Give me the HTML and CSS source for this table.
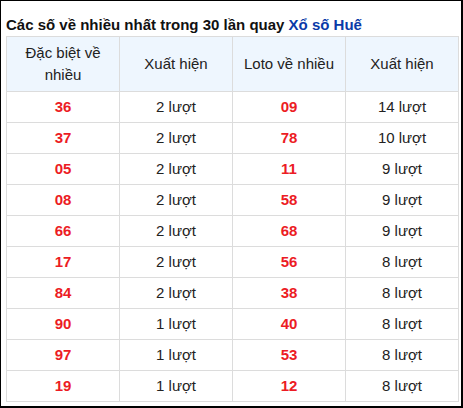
FILE: index.html
```html
<!DOCTYPE html>
<html lang="vi">
<head>
<meta charset="utf-8">
<link rel="stylesheet" href="styles.css">
</head>
<body>
<div class="frame">
  <h2 class="title">Các số về nhiều nhất trong 30 lần quay <a class="link" href="#">Xổ số Huế</a></h2>
  <table class="stats">
    <thead>
      <tr><th>Đặc biệt về nhiều</th><th>Xuất hiện</th><th>Loto về nhiều</th><th>Xuất hiện</th></tr>
    </thead>
    <tbody>
      <tr><td class="num">36</td><td>2 lượt</td><td class="num">09</td><td>14 lượt</td></tr>
      <tr><td class="num">37</td><td>2 lượt</td><td class="num">78</td><td>10 lượt</td></tr>
      <tr><td class="num">05</td><td>2 lượt</td><td class="num">11</td><td>9 lượt</td></tr>
      <tr><td class="num">08</td><td>2 lượt</td><td class="num">58</td><td>9 lượt</td></tr>
      <tr><td class="num">66</td><td>2 lượt</td><td class="num">68</td><td>9 lượt</td></tr>
      <tr><td class="num">17</td><td>2 lượt</td><td class="num">56</td><td>8 lượt</td></tr>
      <tr><td class="num">84</td><td>2 lượt</td><td class="num">38</td><td>8 lượt</td></tr>
      <tr><td class="num">90</td><td>1 lượt</td><td class="num">40</td><td>8 lượt</td></tr>
      <tr><td class="num">97</td><td>1 lượt</td><td class="num">53</td><td>8 lượt</td></tr>
      <tr><td class="num">19</td><td>1 lượt</td><td class="num">12</td><td>8 lượt</td></tr>
    </tbody>
  </table>
</div>
</body>
</html>
```
FILE: styles.css
```css
html, body {
  margin: 0;
  padding: 0;
  background: #fff;
}
body {
  font-family: "Liberation Sans", Arial, sans-serif;
  color: #222;
}
.frame {
  width: 463px;
  height: 408px;
  box-sizing: border-box;
  border-style: solid;
  border-color: #000;
  border-width: 1px 2px 2px 1px;
  padding: 0 2px 0 5px;
}
.title {
  margin: 0;
  padding: 14px 0 1px 0;
  font-size: 15px;
  line-height: 20px;
  font-weight: bold;
  color: #111;
}
.link {
  color: #0a3aa8;
  text-decoration: none;
}
.stats {
  width: 100%;
  border-collapse: collapse;
  table-layout: fixed;
  font-size: 15px;
  line-height: 22px;
}
.stats th, .stats td {
  border: 1px solid #dcdcdc;
  text-align: center;
  padding: 4px;
}
.stats th {
  background: #eef6fe;
  font-weight: normal;
  padding: 5px 6px;
  color: #222;
}
.stats td.num {
  color: #ec1c24;
  font-weight: bold;
}
```
